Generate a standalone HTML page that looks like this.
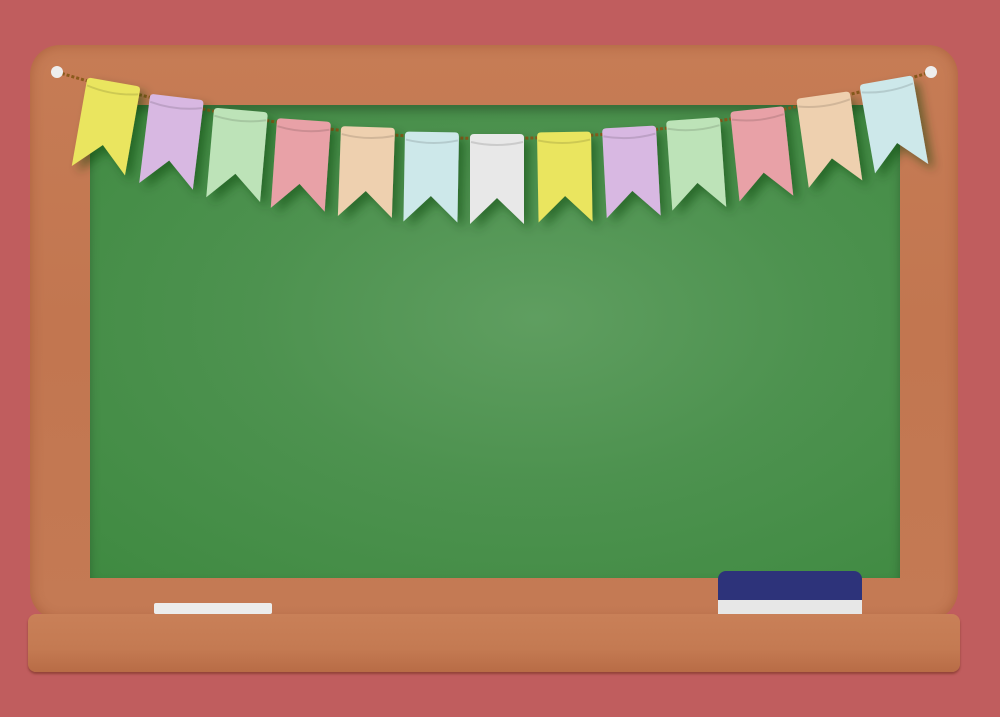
<!DOCTYPE html>
<html><head><style>
body{margin:0;width:1000px;height:717px;background:#c05d5e;overflow:hidden;position:relative}
.frame{position:absolute;left:30px;top:45px;width:928px;height:575px;border-radius:30px;background:linear-gradient(180deg,#c67c55,#c27650 50%,#c47a54);box-shadow:inset 0 0 12px rgba(120,50,20,.35)}
.board{position:absolute;left:90px;top:105px;width:810px;height:473px;background:radial-gradient(ellipse at 55% 45%,#5f9e60 0%,#4d924f 45%,#3f8a41 100%);box-shadow:inset 0 6px 10px rgba(0,0,0,.25)}
.ledge{position:absolute;left:28px;top:614px;width:932px;height:58px;border-radius:8px;background:linear-gradient(180deg,#c98058,#c47a52 60%,#b86c46);box-shadow:0 2px 2px rgba(100,40,20,.5)}
.chalk{position:absolute;left:154px;top:603px;width:118px;height:11px;background:#ececec;border-radius:2px}
.er1{position:absolute;left:718px;top:571px;width:144px;height:30px;background:#2d337a;border-radius:8px 8px 0 0}
.er2{position:absolute;left:718px;top:600px;width:144px;height:14px;background:#e7e7e7}
</style></head><body>
<div class="frame"></div>
<div class="board"></div>
<div class="ledge"></div>
<div class="chalk"></div>
<div class="er1"></div><div class="er2"></div>
<svg width="1000" height="717" style="position:absolute;left:0;top:0">
<defs>
<filter id="sh" x="-30%" y="-30%" width="160%" height="160%"><feDropShadow dx="6" dy="6" stdDeviation="5" flood-color="#0a3a0c" flood-opacity="0.45"/></filter>
<g id="f"><path d="M-27 4 Q-27 0 -23 0 L23 0 Q27 0 27 4 L27 90 L0 64 L-27 90 Z"/><path d="M-26 8 Q0 14 26 8" stroke="rgba(0,0,0,.12)" stroke-width="2" fill="none"/></g></defs>
<path d="M57 72 Q 494 205 931 72" stroke="#8a5a1c" stroke-width="3" fill="none" stroke-dasharray="3 2"/>
<circle cx="57" cy="72" r="6" fill="#eee"/><circle cx="931" cy="72" r="6" fill="#eee"/>
<g filter="url(#sh)">
<g fill="#eae55e" transform="translate(114,82) rotate(10)"><use href="#f"/></g>
<g fill="#d8b8e2" transform="translate(177,97) rotate(7)"><use href="#f"/></g>
<g fill="#bde3b8" transform="translate(241,110) rotate(5)"><use href="#f"/></g>
<g fill="#e8a1a7" transform="translate(304,120) rotate(4)"><use href="#f"/></g>
<g fill="#eed0af" transform="translate(368,127) rotate(2)"><use href="#f"/></g>
<g fill="#cde8ea" transform="translate(432,132) rotate(1)"><use href="#f"/></g>
<g fill="#e8e8e8" transform="translate(497,134)"><use href="#f"/></g>
<g fill="#eae55e" transform="translate(564,132) rotate(-1)"><use href="#f"/></g>
<g fill="#d8b8e2" transform="translate(629,127) rotate(-3)"><use href="#f"/></g>
<g fill="#bde3b8" transform="translate(693,119) rotate(-4)"><use href="#f"/></g>
<g fill="#e8a1a7" transform="translate(757,109) rotate(-6)"><use href="#f"/></g>
<g fill="#eed0af" transform="translate(823,95) rotate(-8)"><use href="#f"/></g>
<g fill="#cde8ea" transform="translate(886,80) rotate(-10)"><use href="#f"/></g>
</g>
</svg>
</body></html>
